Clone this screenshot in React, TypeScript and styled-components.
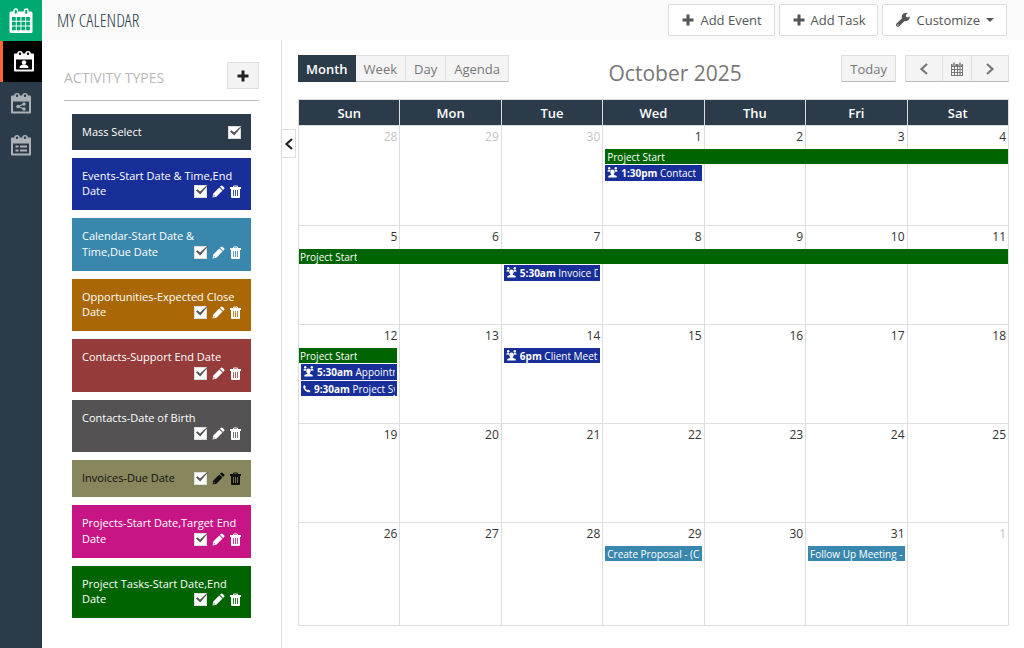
import React from "react";
import styled, { createGlobalStyle, css } from "styled-components";

const Global = createGlobalStyle`
  *, *::before, *::after { box-sizing: border-box; }
  body { margin: 0; background: #fff; color: #333; font: 13px/20px "Open Sans", "Noto Sans", sans-serif; }
  button, input { font: inherit; color: inherit; margin: 0; }
  button { cursor: pointer; }
`;

const Shell = styled.div`
  display: grid;
  grid-template-columns: 42px minmax(0, 1fr);
  min-height: 100vh;
`;

const Rail = styled.nav`
  background: #2c3b49;
  display: flex;
  flex-direction: column;
`;

const RailLink = styled.a<{ $kind?: "brand" | "active" }>`
  display: flex;
  align-items: center;
  justify-content: center;
  height: 42px;
  color: #abb1b6;
  ${p => p.$kind === "brand" && css`background: #00a872; color: #fff; height: 41px;`}
  ${p => p.$kind === "active" && css`background: #000; color: #fff; height: 41px; border-left: 3px solid #ff6430; padding-left: 3px;`}
`;

const Page = styled.div`
  display: flex;
  flex-direction: column;
`;

const TopBar = styled.header`
  display: flex;
  align-items: center;
  justify-content: space-between;
  height: 40px;
  padding: 0 17px 0 15px;
  background: #fafafa;
`;

const PageTitle = styled.h1`
  margin: 0;
  font: 300 18px/24px "Open Sans Condensed Light", "Open Sans Condensed", "Liberation Sans Narrow", sans-serif;
  color: #2c3b49;
`;

const Actions = styled.div`
  display: flex;
  gap: 4px;
`;

const ActionButton = styled.button`
  display: flex;
  align-items: center;
  gap: 6px;
  height: 32px;
  padding: 0 12px 0 13px;
  border: 1px solid #ddd;
  border-radius: 2px;
  background: #fff;
  color: #555;
  font-size: 13px;
`;

const Body = styled.div`
  display: grid;
  grid-template-columns: 240px minmax(0, 1fr);
  flex: 1;
`;

const Side = styled.aside`
  border-right: 1px solid #ddd;
  padding: 22px 22px 0;
`;

const SideHead = styled.div`
  display: flex;
  align-items: center;
  justify-content: space-between;
  height: 39px;
  padding-bottom: 11px;
  border-bottom: 1px solid #bbb;
`;

const SideTitle = styled.h2`
  margin: 4px 0 0;
  font-size: 14px;
  line-height: 20px;
  font-weight: 400;
  color: #b8b8b8;
`;

const SquareButton = styled.button`
  display: flex;
  align-items: center;
  justify-content: center;
  width: 32px;
  height: 27px;
  padding: 0;
  border: 1px solid #ddd;
  background: #f3f3f3;
  color: #222;
`;

const TypeList = styled.ul`
  list-style: none;
  margin: 0;
  padding: 8px 8px 0;
  display: grid;
  gap: 8px;
`;

const MassSelect = styled.label`
  display: flex;
  align-items: center;
  justify-content: space-between;
  height: 36px;
  margin: 13px 8px 0;
  padding: 0 10px;
  background: #2c3b49;
  color: #fff;
  font-size: 11px;
`;

const cardSizes = {
  compact: css`height: 37px; line-height: 16px;`,
  normal: css`height: 52px; line-height: 15px;`,
  roomy: css`height: 53px; line-height: 16px;`,
};

const TypeCard = styled.li<{ $bg: string; $dark?: boolean; $size: keyof typeof cardSizes }>`
  padding: 10px;
  background: ${p => p.$bg};
  color: ${p => (p.$dark ? "#111" : "#fff")};
  font-size: 11px;
  ${p => cardSizes[p.$size]}
`;

const Tools = styled.span`
  float: right;
  display: flex;
  align-items: flex-end;
  gap: 5px;
  height: 15px;
`;

const CheckWrap = styled.span`
  position: relative;
  display: block;
  width: 13px;
  height: 13px;
  svg { position: absolute; left: 0; top: -1px; pointer-events: none; }
`;

const CheckInput = styled.input`
  appearance: none;
  display: block;
  width: 13px;
  height: 13px;
  border: 1px solid #ddd;
  background: #fff;
  & + svg { visibility: hidden; }
  &:checked + svg { visibility: visible; }
`;

const IconButton = styled.button`
  display: flex;
  padding: 0;
  border: 0;
  background: none;
`;

const Main = styled.main`
  position: relative;
  padding: 15px 15px 22px 16px;
`;

const Collapse = styled.button`
  position: absolute;
  left: 0;
  top: 89px;
  display: flex;
  align-items: center;
  justify-content: center;
  width: 14px;
  height: 29px;
  padding: 0;
  border: 1px solid #ddd;
  border-left: 0;
  background: #fff;
  color: #222;
`;

const Toolbar = styled.div`
  display: flex;
  align-items: flex-start;
  justify-content: space-between;
  height: 44px;
`;

const Group = styled.div`
  display: flex;
`;

const NavGroup = styled(Group)`
  gap: 9px;
`;

const ToolButton = styled.button<{ $active?: boolean }>`
  display: flex;
  align-items: center;
  justify-content: center;
  height: 27px;
  padding: 0 8px;
  border: 1px solid #ddd;
  border-bottom-color: #bbb;
  background: #f4f4f4;
  color: #777;
  font-size: 13px;
  & + & { border-left: 0; }
  ${p => p.$active && css`padding: 0 7px; background: #2c3b49; border-color: #2c3b49; color: #fff; font-weight: 600;`}
`;

const ArrowButton = styled(ToolButton)`
  width: 37px;
  padding: 0;
  &:first-child { width: 38px; }
  &:last-child { border-left: 0; }
`;

const PickButton = styled(ToolButton)`
  width: 29px;
  padding: 0;
  border-left: 0;
`;

const MonthTitle = styled.h2`
  margin: 3px 0 0;
  font-size: 21px;
  line-height: 30px;
  font-weight: 400;
  color: #777;
`;

const Grid = styled.table`
  width: 100%;
  table-layout: fixed;
  border-collapse: separate;
  border-spacing: 0;
  border: solid #ddd;
  border-width: 1px 0 0 1px;
`;

const HeadCell = styled.th`
  height: 26px;
  padding: 0;
  border: solid #ddd;
  border-width: 0 1px 1px 0;
  background: #2c3b49;
  color: #fff;
  font-size: 13px;
  font-weight: 600;
`;

const DayCell = styled.td<{ $height: number }>`
  height: ${p => p.$height}px;
  padding: 0;
  border: solid #ddd;
  border-width: 0 1px 1px 0;
  vertical-align: top;
`;

const DayNumber = styled.div<{ $other: boolean }>`
  height: 23px;
  padding: 1px 2px 0 0;
  text-align: right;
  font-size: 12px;
  color: ${p => (p.$other ? "#c4c4c4" : "#333")};
`;

const Slots = styled.div`
  display: grid;
  grid-template-columns: minmax(0, 1fr);
  grid-template-rows: 15px 16px 15px;
  row-gap: 1px;
`;

const Chip = styled.a<{ $color: string; $slot: number; $span: number; $from: boolean; $to: boolean }>`
  position: relative;
  z-index: 1;
  grid-row: ${p => p.$slot};
  display: flex;
  align-items: flex-start;
  gap: 3px;
  width: calc(${p => p.$span * 100}% + ${p => p.$span - 1 - (p.$from ? 2 : 0) - (p.$to ? 2 : 0)}px);
  margin-left: ${p => (p.$from ? 2 : 0)}px;
  padding: 0 2px 0 ${p => (p.$from ? 2 : 1)}px;
  background: ${p => p.$color};
  color: #fff;
  font-size: 10px;
  line-height: 17px;
  text-decoration: none;
  white-space: nowrap;
  svg { flex: none; margin-top: 2px; }
`;

const ChipText = styled.span`
  overflow: hidden;
  min-width: 0;
  height: 15px;
`;

const Plus = () => (
  <svg width="12" height="12" viewBox="0 0 12 12" fill="currentColor" aria-hidden="true">
    <path d="M4.500 0.500h3v4h4v3h-4v4h-3v-4h-4v-3h4z" />
  </svg>
);

const Wrench = () => (
  <svg width="14" height="14" viewBox="0 0 14 14" fill="currentColor" aria-hidden="true">
    <path fillRule="evenodd" d="M13.6 3.2 11.6 4.6 9.9 3.6V1.8L11.8.5A4 4 0 0 0 6 5.2L.6 10.6a1.7 1.7 0 0 0 2.6 2.6L8.6 8a4 4 0 0 0 5-4.8ZM2 11.2a.7.7 0 1 1 0 1.4.7.7 0 0 1 0-1.4Z" />
  </svg>
);

const Chevron = ({ right }: { right?: boolean }) => (
  <svg width="12" height="12" viewBox="0 0 12 12" fill="none" stroke="currentColor" strokeWidth="2.200" aria-hidden="true">
    <path d={right ? "M3 1l5.500 5L3 11" : "M9 1L3.500 6 9 11"} />
  </svg>
);

const Tick = () => (
  <svg width="15" height="13" viewBox="0 0 15 13" aria-hidden="true">
    <path d="M2 6.500 3.500 5.200 6 7.600 13.500.7 14 1.300 6.200 10.600Z" fill="#555" />
  </svg>
);

const Pencil = () => (
  <svg width="13" height="13" viewBox="0 0 13 13" fill="currentColor" aria-hidden="true">
    <path fillRule="evenodd" d="M8.800.9a1.300 1.300 0 0 1 1.900 0l1.300 1.300a1.300 1.300 0 0 1 0 1.900L11.100 5 7.900 1.800ZM7.300 2.400l3.200 3.200-6.100 6.100L.5 12.500l.8-4.100ZM1.900 9.900l-.4 1.600 1.600-.4Z" />
  </svg>
);

const Trash = () => (
  <svg width="11" height="13" viewBox="0 0 11 13" aria-hidden="true">
    <path d="M3.500 2.500V1h4v1.500" fill="none" stroke="currentColor" />
    <path d="M0 2h11v2H0z" fill="currentColor" />
    <path fill="currentColor" fillRule="evenodd" d="M1 3.500h9V12a1 1 0 0 1-1 1H2a1 1 0 0 1-1-1ZM3 5v6h.8V5ZM5.100 5v6h.8V5ZM7.200 5v6H8V5Z" />
  </svg>
);

const CalendarGlyph = () => (
  <svg width="14" height="14" viewBox="0 0 14 14" aria-hidden="true">
    <path fill="currentColor" fillRule="evenodd" d="M1 2h12v12H1ZM2 5v2h2V5Zm3 0v2h2V5Zm3 0v2h1.500V5Zm2.500 0v2H12V5ZM2 8v2h2V8Zm3 0v2h2V8Zm3 0v2h1.500V8Zm2.500 0v2H12V8ZM2 11v2h2v-2Zm3 0v2h2v-2Zm3 0v2h1.500v-2Zm2.500 0v2H12v-2Z" />
    <path d="M4 .5v3M10 .5v3" stroke="#f4f4f4" strokeWidth="3" />
    <path d="M4 .5v3M10 .5v3" stroke="currentColor" strokeWidth="1.500" />
  </svg>
);

const BrandCalendar = () => (
  <svg width="24" height="26" viewBox="0 0 24 26" aria-hidden="true">
    <path fill="currentColor" d="M2 3.500h20a1.500 1.500 0 0 1 1.500 1.500v18.500A1.500 1.500 0 0 1 22 25H2A1.500 1.500 0 0 1 .5 23.500V5A1.500 1.500 0 0 1 2 3.500Z" />
    <path fill="#00a872" d="M3 9h3.800v3.800H3zm4.700 0h3.800v3.800H7.700zm4.700 0h3.800v3.800h-3.800zm4.700 0h3.800v3.800h-3.800zM3 13.700h3.800v3.800H3zm4.700 0h3.800v3.800H7.700zm4.700 0h3.800v3.800h-3.800zm4.700 0h3.800v3.800h-3.800zM3 18.400h3.800v3.800H3zm4.700 0h3.800v3.800H7.700zm4.700 0h3.800v3.800h-3.800zm4.700 0h3.800v3.800h-3.800z" />
    <rect x="5" y="1" width="3.500" height="5.500" rx="1.700" fill="#00a872" stroke="currentColor" strokeWidth="1.400" />
    <rect x="15.500" y="1" width="3.500" height="5.500" rx="1.700" fill="#00a872" stroke="currentColor" strokeWidth="1.400" />
  </svg>
);

const RailCalendar = ({ hole, children }: { hole: string; children: React.ReactNode }) => (
  <svg width="20" height="21" viewBox="0 0 20 21" aria-hidden="true">
    <path fill="currentColor" fillRule="evenodd" d="M1 2.500h18a1 1 0 0 1 1 1v16a1 1 0 0 1-1 1H1a1 1 0 0 1-1-1v-16a1 1 0 0 1 1-1ZM2 8.500v10h16v-10Z" />
    <circle cx="6" cy="2.800" r="2" fill={hole} stroke="currentColor" strokeWidth="1.600" />
    <circle cx="14" cy="2.800" r="2" fill={hole} stroke="currentColor" strokeWidth="1.600" />
    {children}
  </svg>
);

const People = () => (
  <svg width="11" height="11" viewBox="0 0 11 11" fill="currentColor" aria-hidden="true">
    <circle cx="2.200" cy="1.300" r="1.200" />
    <circle cx="8.800" cy="1.300" r="1.200" />
    <path d="M.3 4.600C.5 2.600 2 2.300 3.400 3L3 4.800ZM10.700 4.600C10.500 2.600 9 2.300 7.600 3L8 4.800Z" />
    <ellipse cx="5.500" cy="5" rx="2.300" ry="2.400" />
    <path d="M4.200 6h2.600v1.800L9.700 9v1.500H1.300V9l2.900-1.200z" />
  </svg>
);

const Phone = () => (
  <svg width="8" height="11" viewBox="0 0 9 11" fill="currentColor" aria-hidden="true">
    <path d="M.3 2.700 1.800 1.700l1.500 2.200-.9 1A6 6 0 0 0 5.100 7.600l1-.9L8.400 8.200 7.500 9.800C3.900 10.300-.2 6.300.3 2.700Z" />
  </svg>
);

type CardType = { label: string; bg: string; size: keyof typeof cardSizes; dark?: boolean };

const types: CardType[] = [
  { label: "Events-Start Date & Time,End Date", bg: "#182e99", size: "normal" },
  { label: "Calendar-Start Date & Time,Due Date", bg: "#3a87ad", size: "roomy" },
  { label: "Opportunities-Expected Close Date", bg: "#aa6705", size: "normal" },
  { label: "Contacts-Support End Date", bg: "#953b39", size: "roomy" },
  { label: "Contacts-Date of Birth", bg: "#545252", size: "normal" },
  { label: "Invoices-Due Date", bg: "#87865d", size: "compact", dark: true },
  { label: "Projects-Start Date,Target End Date", bg: "#c71585", size: "roomy" },
  { label: "Project Tasks-Start Date,End Date", bg: "#006400", size: "normal" },
];

type Entry = { title: string; color: string; time?: string; icon?: "people" | "phone"; slot?: number; span?: number; from?: boolean; to?: boolean };

const entries: Record<number, Entry[]> = {
  3: [
    { title: "Project Start", color: "#006400", span: 4, to: false },
    { title: "Contact", time: "1:30pm", color: "#182e99", icon: "people", slot: 2 },
  ],
  7: [{ title: "Project Start", color: "#006400", span: 7, from: false, to: false }],
  9: [{ title: "Invoice Due", time: "5:30am", color: "#182e99", icon: "people", slot: 2 }],
  14: [
    { title: "Project Start", color: "#006400", from: false },
    { title: "Appointment", time: "5:30am", color: "#182e99", icon: "people", slot: 2 },
    { title: "Project Sync", time: "9:30am", color: "#182e99", icon: "phone", slot: 3 },
  ],
  16: [{ title: "Client Meeting", time: "6pm", color: "#182e99", icon: "people" }],
  31: [{ title: "Create Proposal - (Contact)", color: "#3a87ad" }],
  33: [{ title: "Follow Up Meeting - (Contact)", color: "#3a87ad" }],
};

const weekdays = ["Sun", "Mon", "Tue", "Wed", "Thu", "Fri", "Sat"];
const rowHeights = [100, 99, 99, 99, 103];

const dayOf = (i: number) => (i < 3 ? 28 + i : i > 33 ? i - 33 : i - 2);

const Check = ({ label }: { label: string }) => (
  <CheckWrap>
    <CheckInput type="checkbox" defaultChecked aria-label={label} />
    <Tick />
  </CheckWrap>
);

export default function App() {
  return (
    <Shell>
      <Global />
      <Rail>
        <RailLink href="#calendar" $kind="brand" aria-label="Calendar"><BrandCalendar /></RailLink>
        <RailLink href="#mine" $kind="active" aria-label="My calendar">
          <RailCalendar hole="#000">
            <circle cx="10" cy="11.500" r="2.200" fill="currentColor" />
            <path d="M5.500 17c0-2.300 1.500-3.500 4.500-3.500s4.500 1.200 4.500 3.500z" fill="currentColor" />
          </RailCalendar>
        </RailLink>
        <RailLink href="#shared" aria-label="Shared calendar">
          <RailCalendar hole="#2c3b49">
            <path d="M13 11 7 13.500l6 2.500" fill="none" stroke="currentColor" strokeWidth="1.200" />
            <circle cx="13" cy="11" r="1.700" fill="currentColor" />
            <circle cx="7" cy="13.500" r="1.700" fill="currentColor" />
            <circle cx="13" cy="16" r="1.700" fill="currentColor" />
          </RailCalendar>
        </RailLink>
        <RailLink href="#list" aria-label="List">
          <RailCalendar hole="#2c3b49">
            <path d="M4.500 10.500h3v2h-3zM9 10.500h7v2H9zM4.500 14.500h3v2h-3zM9 14.500h7v2H9z" fill="currentColor" />
          </RailCalendar>
        </RailLink>
      </Rail>
      <Page>
        <TopBar>
          <PageTitle>MY CALENDAR</PageTitle>
          <Actions>
            <ActionButton><Plus />Add Event</ActionButton>
            <ActionButton><Plus />Add Task</ActionButton>
            <ActionButton>
              <Wrench />Customize
              <svg width="8" height="4" viewBox="0 0 8 4" aria-hidden="true"><path d="M0 0h8L4 4z" fill="currentColor" /></svg>
            </ActionButton>
          </Actions>
        </TopBar>
        <Body>
          <Side>
            <SideHead>
              <SideTitle>ACTIVITY TYPES</SideTitle>
              <SquareButton aria-label="Add activity type"><Plus /></SquareButton>
            </SideHead>
            <MassSelect>Mass Select<Check label="Mass Select" /></MassSelect>
            <TypeList>
              {types.map(t => (
                <TypeCard key={t.label} $bg={t.bg} $dark={t.dark} $size={t.size}>
                  {t.label}
                  <Tools>
                    <Check label={t.label} />
                    <IconButton aria-label="Edit"><Pencil /></IconButton>
                    <IconButton aria-label="Delete"><Trash /></IconButton>
                  </Tools>
                </TypeCard>
              ))}
            </TypeList>
          </Side>
          <Main>
            <Collapse aria-label="Collapse panel"><Chevron /></Collapse>
            <Toolbar>
              <Group>
                <ToolButton $active>Month</ToolButton>
                <ToolButton>Week</ToolButton>
                <ToolButton>Day</ToolButton>
                <ToolButton>Agenda</ToolButton>
              </Group>
              <MonthTitle>October 2025</MonthTitle>
              <NavGroup>
                <ToolButton>Today</ToolButton>
                <Group>
                  <ArrowButton aria-label="Previous"><Chevron /></ArrowButton>
                  <PickButton aria-label="Pick a date"><CalendarGlyph /></PickButton>
                  <ArrowButton aria-label="Next"><Chevron right /></ArrowButton>
                </Group>
              </NavGroup>
            </Toolbar>
            <Grid>
              <thead>
                <tr>{weekdays.map(d => <HeadCell key={d} scope="col">{d}</HeadCell>)}</tr>
              </thead>
              <tbody>
                {rowHeights.map((h, week) => (
                  <tr key={week}>
                    {weekdays.map((d, col) => {
                      const i = week * 7 + col;
                      return (
                        <DayCell key={d} $height={h}>
                          <DayNumber $other={i < 3 || i > 33}>{dayOf(i)}</DayNumber>
                          {entries[i] && (
                            <Slots>
                              {entries[i].map(e => (
                                <Chip
                                  key={e.title}
                                  href="#event"
                                  $color={e.color}
                                  $slot={e.slot ?? 1}
                                  $span={e.span ?? 1}
                                  $from={e.from ?? true}
                                  $to={e.to ?? true}
                                >
                                  {e.icon === "people" && <People />}
                                  {e.icon === "phone" && <Phone />}
                                  <ChipText>{e.time && <b>{e.time} </b>}{e.title}</ChipText>
                                </Chip>
                              ))}
                            </Slots>
                          )}
                        </DayCell>
                      );
                    })}
                  </tr>
                ))}
              </tbody>
            </Grid>
          </Main>
        </Body>
      </Page>
    </Shell>
  );
}
